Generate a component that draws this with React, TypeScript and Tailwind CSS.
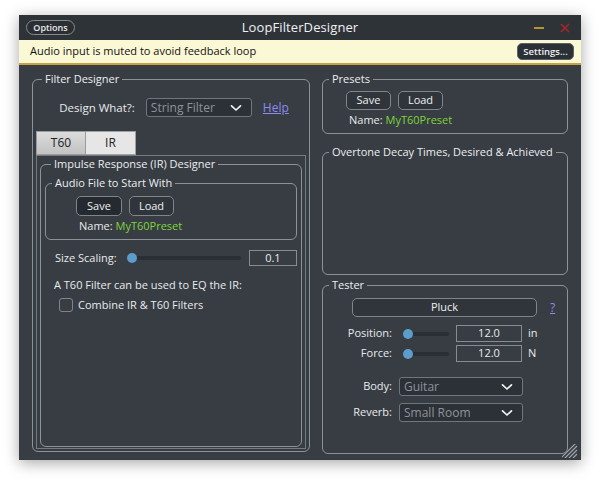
import React from 'react';

const Chevron = () => (
  <svg width="12" height="8" viewBox="0 0 12 8" fill="none">
    <path d="M1.5 1.8 L6 6 L10.5 1.8" stroke="#f2f3f4" strokeWidth="1.7" strokeLinecap="round" strokeLinejoin="round" />
  </svg>
);

const Dropdown = ({ value, className }: { value: string; className: string }) => (
  <div className={`h-[19px] flex items-center justify-between pl-[4px] pr-[9px] bg-[#2c3137] border border-[#6f777d] rounded-[3px] text-[#8d9399] text-[12px] ${className}`}>
    <span>{value}</span>
    <Chevron />
  </div>
);

const Btn = ({ label, className }: { label: string; className: string }) => (
  <button className={`flex items-center justify-center bg-[#2f353b] border border-[#7e868b] rounded-[5px] text-[#eef0f1] text-[11px] font-medium ${className}`}>
    {label}
  </button>
);

const Slider = ({ className }: { className: string }) => (
  <div className={`relative h-[10px] flex items-center ${className}`}>
    <div className="h-[4px] w-full rounded-full bg-[#2a2f34]" />
    <div className="absolute left-0 top-0 w-[10px] h-[10px] rounded-full bg-[#5d9dcb]" />
  </div>
);

const Group = ({
  title,
  className,
  children,
}: {
  title: string;
  className: string;
  children?: React.ReactNode;
}) => (
  <fieldset className={`border border-[#8b9398] rounded-[6px] min-w-0 ${className}`}>
    <legend className="ml-[6px] px-[3px] leading-[16px] font-medium text-[#eceef0]">{title}</legend>
    {children}
  </fieldset>
);

export default function App() {
  return (
    <div className="min-h-screen bg-white pt-[15px] pl-[19px] font-['Open_Sans',sans-serif]">
      <div className="relative w-[562px] h-[445px] bg-[#373d43] shadow-[0_3px_14px_rgba(0,0,0,0.35)] flex flex-col text-[11px] text-[#e8eaec]">
        {/* title bar */}
        <div className="h-[25px] bg-[#2e3338] grid grid-cols-[1fr_auto_1fr] items-center px-[7px]">
          <div>
            <button className="w-[49px] h-[15px] rounded-full border border-[#858c91] bg-[#2a2f34] text-[9px] font-semibold text-[#e8eaec] leading-none">
              Options
            </button>
          </div>
          <div className="text-[13px] text-[#f0f1f2] tracking-[0.1px]">LoopFilterDesigner</div>
          <div className="flex justify-end items-center gap-[16px] pr-[4px]">
            <div className="w-[10px] h-[2px] bg-[#b3952f]" />
            <svg width="10" height="10" viewBox="0 0 10 10">
              <path d="M1 1 L9 9 M9 1 L1 9" stroke="#a8262a" strokeWidth="1.6" />
            </svg>
          </div>
        </div>

        {/* mute banner */}
        <div className="h-[25px] bg-[#fbf8d6] border-b-2 border-[#c8a241] flex items-center justify-between pl-[11px] pr-[7px]">
          <span className="text-[11px] text-[#111]">Audio input is muted to avoid feedback loop</span>
          <button className="w-[57px] h-[17px] rounded-[5px] bg-[#2b3036] border border-[#5a6167] text-[9.5px] font-semibold text-[#eef0f1] leading-none">
            Settings...
          </button>
        </div>

        {/* body */}
        <div className="flex gap-[12px] px-[13px] pt-[6px]">
          {/* left column */}
          <Group title="Filter Designer" className="w-[278px] h-[381px] px-[3px] pb-[3px]">
            <div className="mt-[11px] flex items-center justify-center gap-[11px] pl-[6px]">
              <span className="font-medium text-[11.5px]">Design What?:</span>
              <Dropdown value="String Filter" className="w-[106px]" />
              <span className="text-[#8c8af4] underline text-[12px] font-medium">Help</span>
            </div>

            <div className="mt-[14px] flex">
              <div className="w-[50px] h-[24px] flex items-center justify-center bg-gradient-to-b from-[#dcdcdc] to-[#c2c2c2] border border-[#9a9a9a] text-[#222] text-[12px]">
                T60
              </div>
              <div className="w-[50px] h-[24px] flex items-center justify-center bg-[#e6e6e6] border border-l-0 border-[#a0a0a0] text-[#222] text-[12px]">
                IR
              </div>
            </div>

            <div className="h-[294px] border border-[#737b80] px-[3px]">
              <Group title="Impulse Response (IR) Designer" className="h-[291px] px-[4px]">
                <Group title="Audio File to Start With" className="mt-[3px] h-[65px]">
                  <div className="mt-[5px] pl-[30px] flex gap-[7px]">
                    <Btn label="Save" className="w-[46px] h-[20px] bg-[#242a2f]" />
                    <Btn label="Load" className="w-[45px] h-[20px]" />
                  </div>
                  <div className="mt-[3px] pl-[33px] leading-[14px] font-medium">
                    Name: <span className="text-[#7fd33c]">MyT60Preset</span>
                  </div>
                </Group>

                <div className="mt-[10px] flex items-center h-[16px]">
                  <span className="ml-[10px] w-[73px] font-medium">Size Scaling:</span>
                  <Slider className="w-[116px]" />
                  <div className="ml-[8px] w-[49px] h-[16px] border border-[#858d92] flex items-center justify-center text-[11px]">
                    0.1
                  </div>
                </div>

                <div className="mt-[12px] ml-[9px] leading-[14px] font-medium">A T60 Filter can be used to EQ the IR:</div>

                <div className="mt-[5px] ml-[14px] flex items-center gap-[5px]">
                  <div className="w-[14px] h-[14px] rounded-[3px] border border-[#7d858a]" />
                  <span className="font-medium">Combine IR &amp; T60 Filters</span>
                </div>
              </Group>
            </div>
          </Group>

          {/* right column */}
          <div className="w-[246px] flex flex-col">
            <Group title="Presets" className="h-[63px]">
              <div className="mt-[4px] pl-[23px] flex gap-[7px]">
                <Btn label="Save" className="w-[45px] h-[19px]" />
                <Btn label="Load" className="w-[45px] h-[19px]" />
              </div>
              <div className="mt-[3px] pl-[26px] leading-[14px] font-medium">
                Name: <span className="text-[#7fd33c]">MyT60Preset</span>
              </div>
            </Group>

            <Group title="Overtone Decay Times, Desired & Achieved" className="mt-[10px] h-[131px]" />

            <Group title="Tester" className="mt-[2px] h-[177px]">
              <div className="mt-[5px] ml-[29px] flex items-center gap-[13px]">
                <Btn label="Pluck" className="w-[185px] h-[19px]" />
                <span className="text-[#8c8af4] underline text-[12px] font-medium">?</span>
              </div>

              <div className="mt-[8px] flex items-center h-[17px]">
                <span className="w-[69px] text-right font-medium">Position:</span>
                <Slider className="ml-[11px] w-[46px]" />
                <div className="ml-[7px] w-[66px] h-[17px] border border-[#858d92] flex items-center justify-center">12.0</div>
                <span className="ml-[6px] font-medium">in</span>
              </div>
              <div className="mt-[3px] flex items-center h-[17px]">
                <span className="w-[69px] text-right font-medium">Force:</span>
                <Slider className="ml-[11px] w-[46px]" />
                <div className="ml-[7px] w-[66px] h-[17px] border border-[#858d92] flex items-center justify-center">12.0</div>
                <span className="ml-[6px] font-medium">N</span>
              </div>

              <div className="mt-[15px] flex items-center">
                <span className="w-[69px] text-right font-medium">Body:</span>
                <Dropdown value="Guitar" className="ml-[7px] w-[124px]" />
              </div>
              <div className="mt-[7px] flex items-center">
                <span className="w-[69px] text-right font-medium">Reverb:</span>
                <Dropdown value="Small Room" className="ml-[7px] w-[124px]" />
              </div>
            </Group>
          </div>
        </div>

        {/* resize grip */}
        <svg className="absolute right-[3px] bottom-[2px]" width="16" height="14" viewBox="0 0 16 14">
          <path d="M15 2 L3 14 M15 6 L7 14 M15 10 L11 14 M15 -2 L-1 14" stroke="#9ea5a9" strokeWidth="1.2" />
        </svg>
      </div>
    </div>
  );
}
